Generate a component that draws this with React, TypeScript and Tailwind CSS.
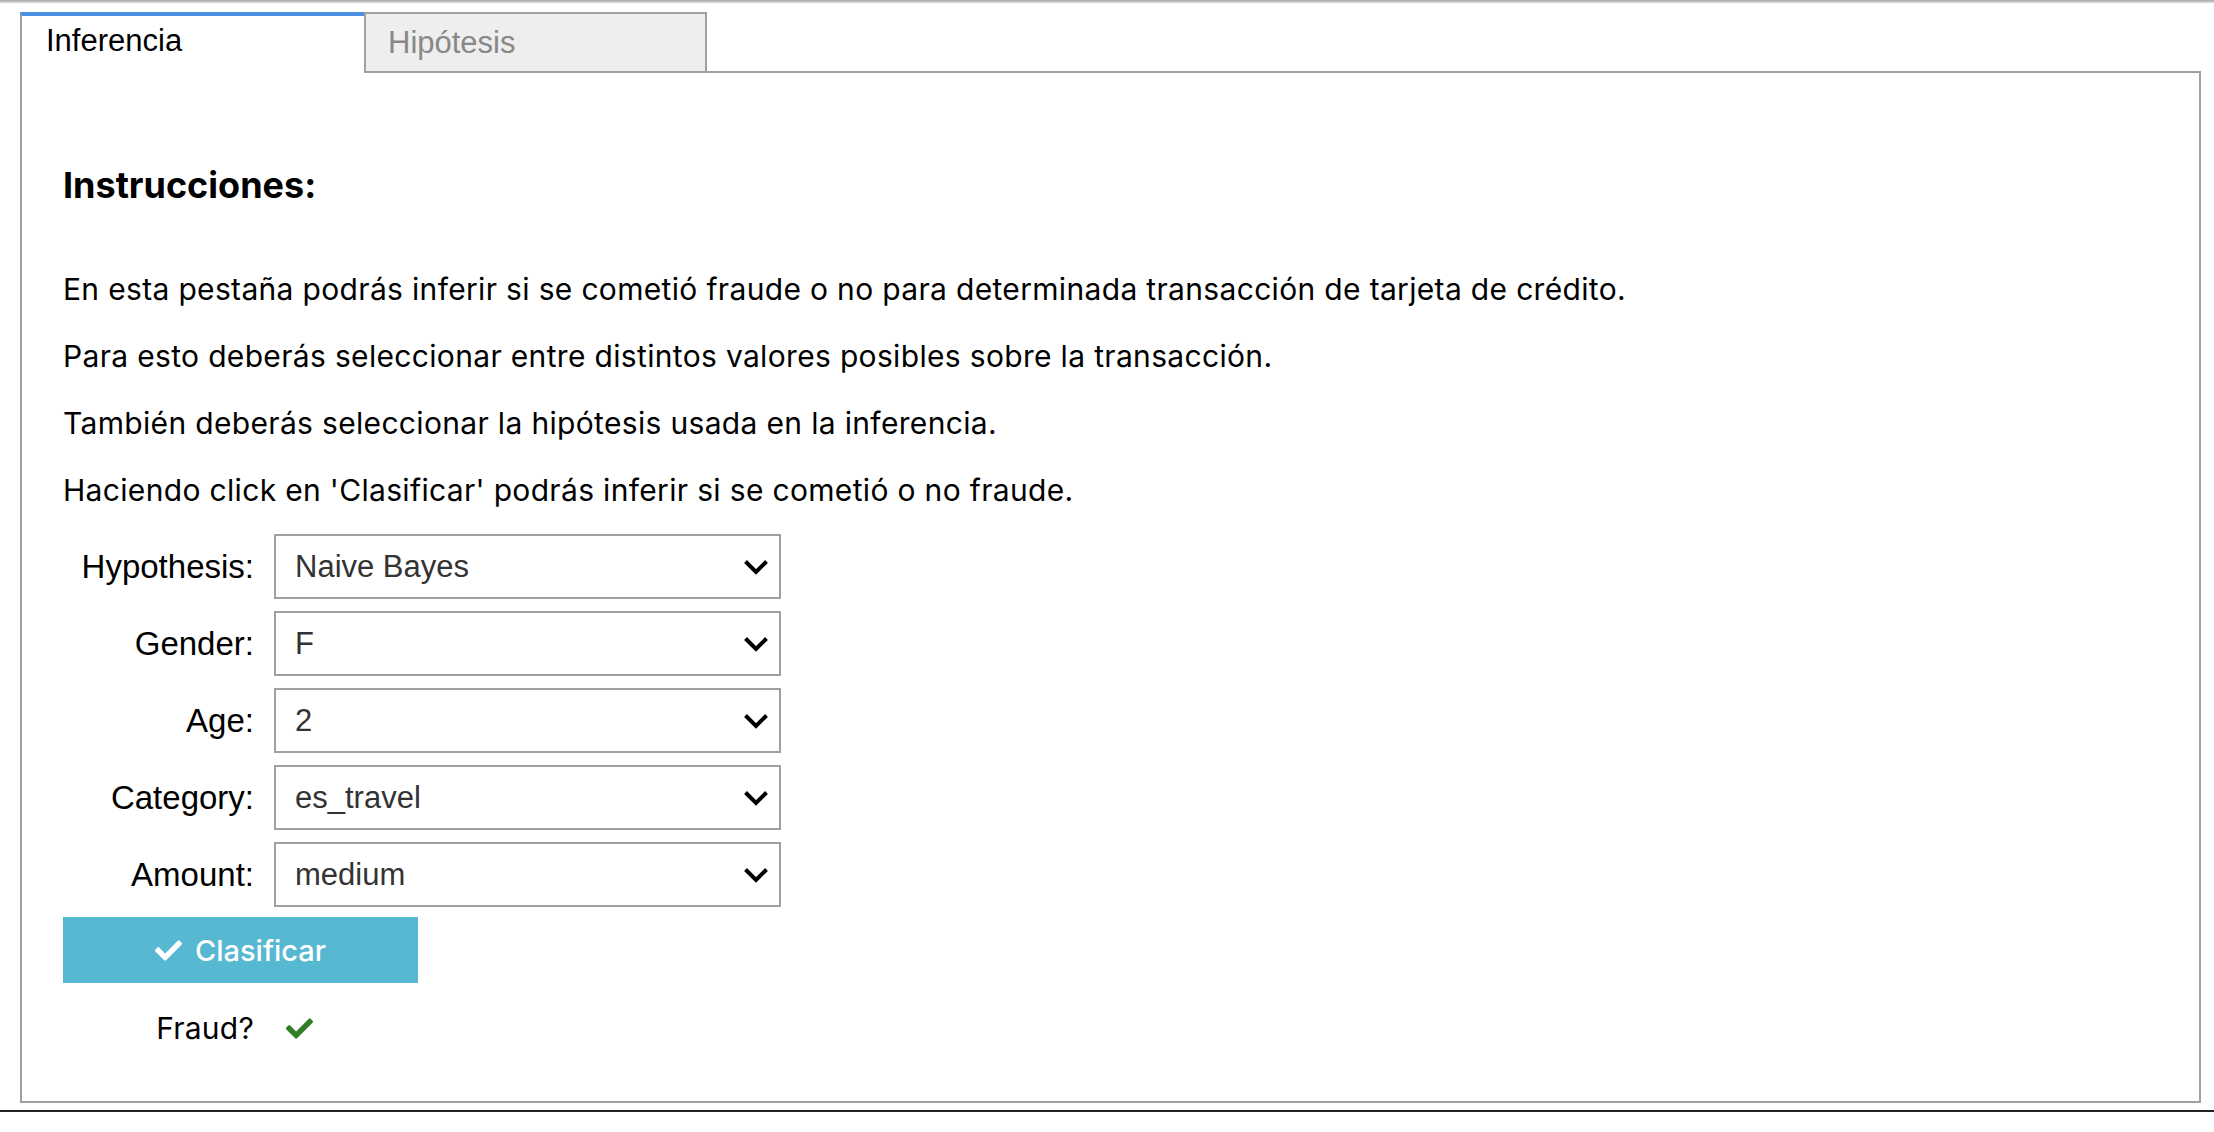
import { FaCheck } from "react-icons/fa";

const rows = [
  { label: "Hypothesis:", value: "Naive Bayes" },
  { label: "Gender:", value: "F" },
  { label: "Age:", value: "2" },
  { label: "Category:", value: "es_travel" },
  { label: "Amount:", value: "medium" },
];

const paragraphs = [
  "En esta pestaña podrás inferir si se cometió fraude o no para determinada transacción de tarjeta de crédito.",
  "Para esto deberás seleccionar entre distintos valores posibles sobre la transacción.",
  "También deberás seleccionar la hipótesis usada en la inferencia.",
  "Haciendo click en 'Clasificar' podrás inferir si se cometió o no fraude.",
];

function Chevron() {
  return (
    <svg width="26" height="16" viewBox="0 0 26 16" fill="none">
      <polyline points="2.5,2.5 13,13 23.5,2.5" stroke="#000" strokeWidth="4" strokeLinejoin="miter" />
    </svg>
  );
}

function SelectBox({ value }: { value: string }) {
  return (
    <div className="flex items-center justify-between w-[507px] h-[65px] border-2 border-[#a0a0a0] bg-white pl-[19px] pr-[10px]">
      <span className="text-[31px] leading-none text-[#333] font-['Liberation_Sans',Arial,sans-serif]">{value}</span>
      <Chevron />
    </div>
  );
}

export default function App() {
  return (
    <div className="w-[2214px] h-[1132px] bg-white overflow-hidden font-['Inter',sans-serif] text-black">
      <div className="h-[3px] bg-gradient-to-b from-[#a8a8a8] to-[#dcdcdc]" />

      <div className="pl-5 pr-[13px]">
        {/* tabs */}
        <div className="flex mt-[9px] h-[61px] font-['Liberation_Sans',Arial,sans-serif] text-[31px] leading-none">
          <div className="w-[344px] bg-white border-t-4 border-t-[#4a90e2] border-l-2 border-l-[#a0a0a0] pl-6 pt-[9px]">
            Inferencia
          </div>
          <div className="w-[343px] bg-[#eeeeee] border-2 border-[#a0a0a0] pl-[22px] pt-[13px] text-[#888]">
            Hipótesis
          </div>
          <div className="flex-1 border-b-2 border-[#a0a0a0]" />
        </div>

        {/* panel */}
        <div className="h-[1030px] flex flex-col items-start border-x-2 border-b-2 border-[#a0a0a0] pl-[41px]">
          <h4 className="mt-[94px] text-[36px] leading-none font-bold">Instrucciones:</h4>

          <div className="mt-[71px] flex flex-col gap-[37px] text-[30px] leading-[30px] tracking-[0.011em]">
            {paragraphs.map((p) => (
              <p key={p}>{p}</p>
            ))}
          </div>

          <div className="mt-[29px] flex flex-col gap-3">
            {rows.map((r) => (
              <div key={r.label} className="flex items-center gap-5">
                <div className="w-[191px] text-right text-[33px] leading-none font-['Liberation_Sans',Arial,sans-serif]">
                  {r.label}
                </div>
                <SelectBox value={r.value} />
              </div>
            ))}
          </div>

          <button className="mt-[10px] flex items-center justify-center gap-[13px] w-[355px] h-[66px] bg-[#56b8d1] text-white text-[29px] leading-none font-medium">
            <FaCheck size={27} />
            Clasificar
          </button>

          <div className="mt-[30px] flex items-center gap-8">
            <div className="w-[191px] text-right text-[30px] leading-[30px] tracking-[0.008em]">Fraud?</div>
            <FaCheck size={27} className="text-[#347d27]" />
          </div>
        </div>
      </div>

      <div className="mt-[7px] h-[2px] bg-[#222]" />
    </div>
  );
}
